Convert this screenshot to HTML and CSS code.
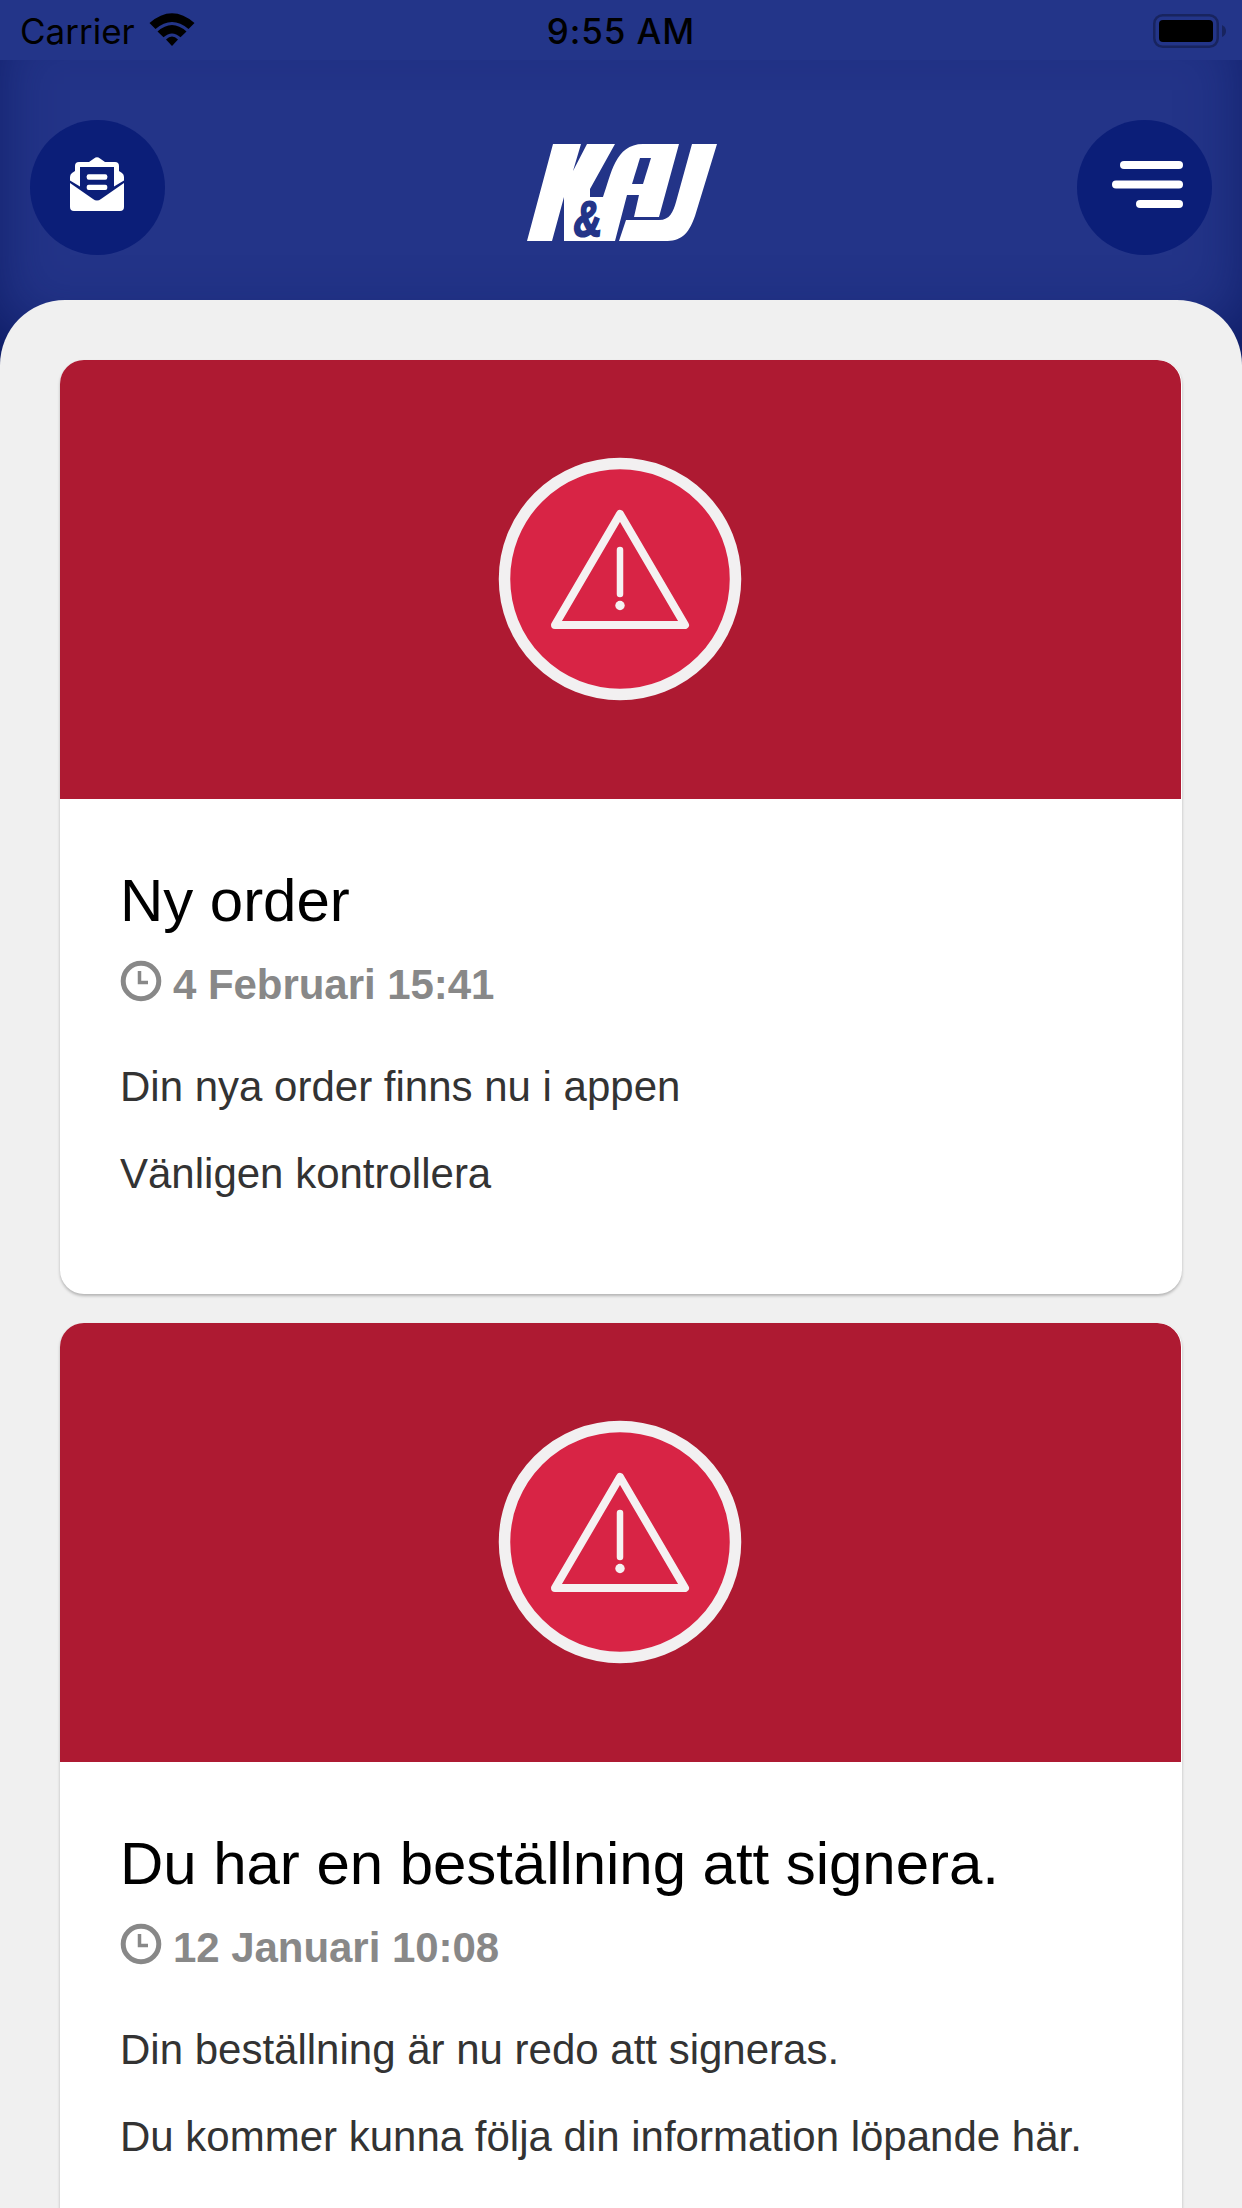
FILE: index.html
```html
<!DOCTYPE html>
<html lang="sv">
<head>
<meta charset="utf-8">
<title>K&amp;AJ</title>
<link rel="stylesheet" href="styles.css">
</head>
<body>
<div class="screen">
  <div class="status-bar">
    <div class="status-left">
      <span class="carrier">Carrier</span>
      <svg class="wifi" viewBox="0 0 46 34" width="46" height="34">
        <path d="M0.500 10 L6.500 16 Q23 2 39.500 16 L45.500 10 Q23 -9.500 0.500 10Z"/>
        <path d="M8.500 18.500 L14.500 24.300 Q23 16.500 31.500 24.300 L37.500 18.500 Q23 5.500 8.500 18.500Z"/>
        <path d="M17 26.500 L23 33 L29 26.500 Q23 20.500 17 26.500Z"/>
      </svg>
    </div>
    <span class="time">9:55 AM</span>
    <svg class="battery" viewBox="0 0 73 34" width="73" height="34">
      <rect x="1.250" y="1.250" width="63.500" height="31.500" rx="8.500" fill="none" stroke="#18245f" stroke-width="2.500"/>
      <rect x="6" y="6" width="54" height="22" rx="4"/>
      <path d="M69 11 Q73 13 73 17 T69 23Z" fill="#18245f"/>
    </svg>
  </div>
  <header class="header">
    <button class="round-button" aria-label="Meddelanden">
      <svg class="mail-icon" viewBox="0 0 54 54" width="54" height="54" fill="#fff">
        <path fill-rule="evenodd" d="M0 23.500 V20 Q0 17.500 2 16 L5 14 V9 Q5 5 9 5 H19 L24 1.500 Q27 -1 30 1.500 L35 5 H45 Q49 5 49 9 V14 L52 16 Q54 17.500 54 20 V23.500 L44 29.500 V10 H10 V29.500Z"/>
        <path d="M0 26 L23 42 Q27 45 31 42 L54 26 V50 Q54 54 50 54 H4 Q0 54 0 50Z"/>
        <rect x="16.700" y="17.300" width="20.600" height="5.400" rx="2"/>
        <rect x="16.700" y="27.700" width="20.600" height="5.400" rx="2"/>
      </svg>
    </button>
    <svg class="logo" role="img" aria-label="K&amp;AJ" viewBox="0 0 190 98" width="190" height="98">
      <g fill="#fff">
        <path d="M26 0 H54 L46 27 L60 0 H88 L63 45 V53 H76 C84 31 88 0 116 0 H152 L132 73 H107 L112 51 H100 L88 97 H37 V53 L25 97 H0Z"/>
        <path d="M165 0 H190 L168 72 C161 92 153 97 138 97 H92 L99 76 H132 C143 76 146 68 149 58Z"/>
      </g>
      <path d="M113 14 H124 L116 40 H105Z" fill="#233488"/>
      <text class="logo-amp" transform="translate(45 92) skewX(-6) scale(.78 1)">&amp;</text>
    </svg>
    <button class="round-button" aria-label="Meny">
      <svg class="menu-icon" viewBox="0 0 72 48" width="72" height="48" fill="#fff">
        <rect x="8" y="0" width="63" height="8" rx="4"/>
        <rect x="0" y="19.500" width="71" height="8" rx="4"/>
        <rect x="24" y="39" width="47" height="8" rx="4"/>
      </svg>
    </button>
  </header>
  <main class="feed">
    <article class="card">
      <div class="banner">
        <svg viewBox="0 0 244 244" width="244" height="244">
          <circle cx="122" cy="122" r="115.500" fill="#d82445" stroke="#f2f0f1" stroke-width="11.500"/>
          <path d="M122 57 L187 168 H57Z" fill="none" stroke="#f5f1f2" stroke-width="8" stroke-linejoin="round"/>
          <path d="M122 93 V137" stroke="#f5f1f2" stroke-width="6.500" stroke-linecap="round"/>
          <circle cx="122" cy="148.500" r="4.700" fill="#f5f1f2"/>
        </svg>
      </div>
      <div class="body">
        <h2 class="title">Ny order</h2>
        <div class="date">
          <svg viewBox="0 0 42 42" width="42" height="42" fill="none" stroke="#888">
            <circle cx="21" cy="21" r="17.800" stroke-width="5"/>
            <path d="M19.500 11 V22.500 H28" stroke-width="3.500"/>
          </svg>
          <span>4 Februari 15:41</span>
        </div>
        <p class="text">Din nya order finns nu i appen</p>
        <p class="text">Vänligen kontrollera</p>
      </div>
    </article>
    <article class="card">
      <div class="banner">
        <svg viewBox="0 0 244 244" width="244" height="244">
          <circle cx="122" cy="122" r="115.500" fill="#d82445" stroke="#f2f0f1" stroke-width="11.500"/>
          <path d="M122 57 L187 168 H57Z" fill="none" stroke="#f5f1f2" stroke-width="8" stroke-linejoin="round"/>
          <path d="M122 93 V137" stroke="#f5f1f2" stroke-width="6.500" stroke-linecap="round"/>
          <circle cx="122" cy="148.500" r="4.700" fill="#f5f1f2"/>
        </svg>
      </div>
      <div class="body">
        <h2 class="title">Du har en beställning att signera.</h2>
        <div class="date">
          <svg viewBox="0 0 42 42" width="42" height="42" fill="none" stroke="#888">
            <circle cx="21" cy="21" r="17.800" stroke-width="5"/>
            <path d="M19.500 11 V22.500 H28" stroke-width="3.500"/>
          </svg>
          <span>12 Januari 10:08</span>
        </div>
        <p class="text">Din beställning är nu redo att signeras.</p>
        <p class="text">Du kommer kunna följa din information löpande här.</p>
        <p class="text">Info</p>
      </div>
    </article>
  </main>
</div>
</body>
</html>
```
FILE: styles.css
```css
* { box-sizing: border-box; }
body { margin: 0; font-family: "Liberation Sans", Arial, sans-serif; }
.screen {
  width: 1242px;
  height: 2208px;
  overflow: hidden;
  background: #f0f0f0;
}
.status-bar {
  display: grid;
  grid-template-columns: 1fr auto 1fr;
  align-items: center;
  height: 60px;
  padding: 0 16px 0 20px;
  background: #233589;
  color: #000;
  font: 35px/60px Inter, sans-serif;
}
.status-left { display: flex; align-items: center; gap: 14px; }
.carrier { width: 115px; padding-top: 1px; }
.wifi { margin-top: -2px; }
.time { padding-top: 1px; margin-left: -4px; font-weight: 500; letter-spacing: 0.9px; }
.battery { justify-self: end; }
.header {
  display: flex;
  justify-content: space-between;
  align-items: flex-start;
  height: 305px;
  padding: 60px 30px 0;
  background: #233488;
  box-shadow: inset 0 -40px 70px -14px #0a185f;
}
.round-button {
  display: flex;
  width: 135px;
  height: 135px;
  padding: 37px 0 0 40px;
  border: 0;
  border-radius: 50%;
  background: #0b1e78;
}
.round-button:last-child { padding: 41px 0 0 35px; }
.logo { overflow: visible; margin-top: 24px; margin-left: 2px; }
.logo-amp {
  font: bold 50px "Liberation Sans", sans-serif;
  fill: #233488;
  stroke: #233488;
  stroke-width: 2px;
}
.feed {
  position: relative;
  display: flex;
  flex-direction: column;
  gap: 29px;
  margin-top: -65px;
  padding: 60px;
  border-radius: 65px 65px 0 0;
  background: #f0f0f0;
}
.card {
  flex-shrink: 0;
  overflow: hidden;
  height: 934px;
  border-radius: 24px;
  background: #fff;
  box-shadow: 0 2px 3px rgba(0, 0, 0, 0.25);
}
.banner {
  display: flex;
  justify-content: center;
  width: 1121px;
  height: 439px;
  padding: 97px 1px 0 0;
  border-top-right-radius: 24px;
  background: #ae1a32;
}
.body { padding: 66px 60px 0 60px; }
.title { margin: 0; font-size: 60px; font-weight: 400; line-height: 72px; letter-spacing: -0.05px; color: #000; }
.date {
  display: flex;
  gap: 11px;
  align-items: flex-start;
  height: 48px;
  margin-top: 23px;
  font-size: 42px;
  font-weight: 700;
  line-height: 50px;
  letter-spacing: -0.05px;
  color: #888;
}
.text { margin: 55px 0 0; font-size: 42px; line-height: 48px; color: #333; white-space: nowrap; }
.text + .text { margin-top: 39px; }
.text + .text + .text { margin-top: 40px; }
```
